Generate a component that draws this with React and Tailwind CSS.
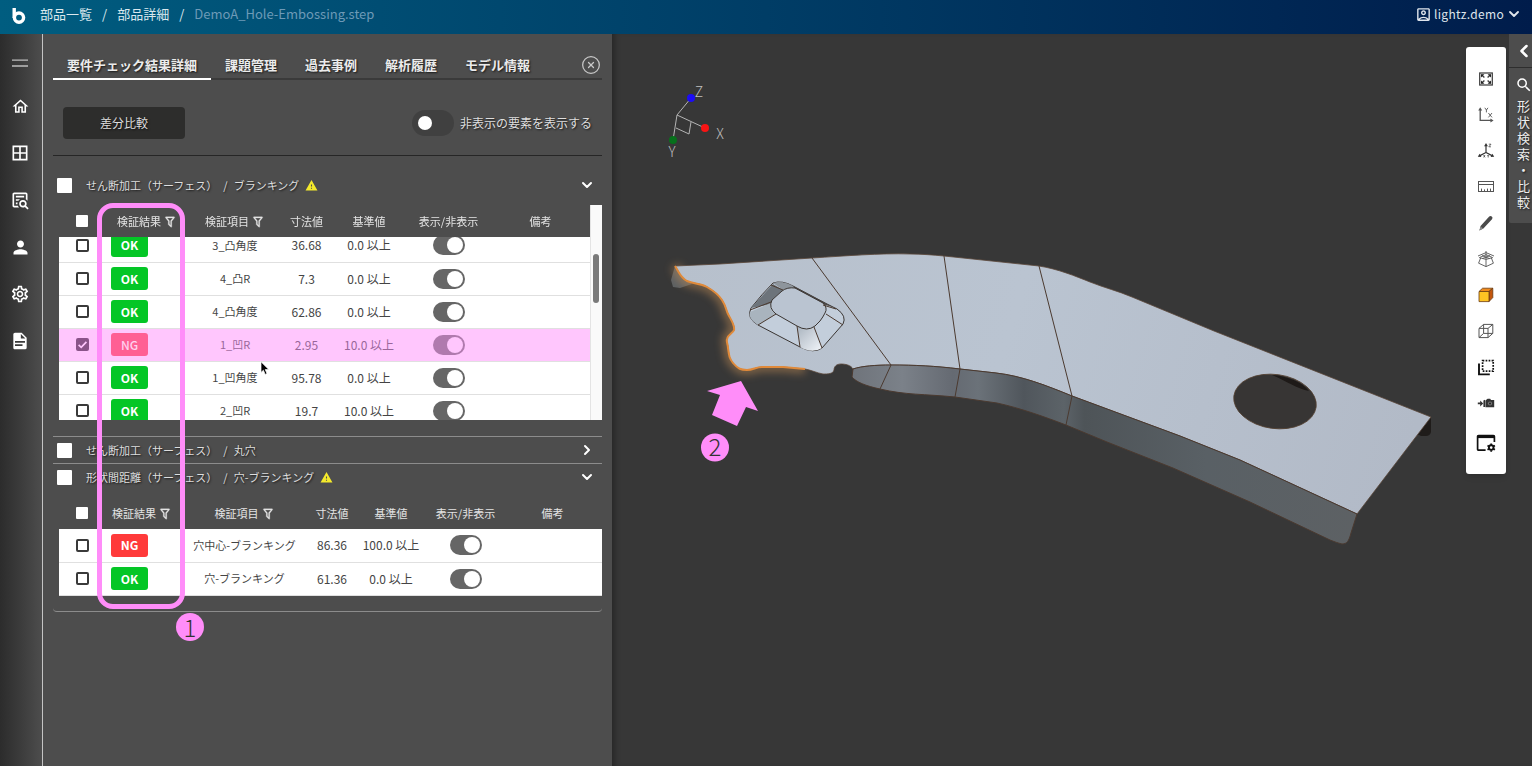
import { useLayoutEffect, useRef } from "react";
import {
  MdBorderAll,
  MdOutlineAccountBox,
  MdOutlineHome,
  MdOutlineSettings,
  MdPerson,
  MdSearch,
  MdWarning,
} from "react-icons/md";
import { ChevronDown, ChevronLeft, ChevronRight, CircleX } from "lucide-react";

const TABS = ["要件チェック結果詳細", "課題管理", "過去事例", "解析履歴", "モデル情報"];

const BLANKING_ROWS = [
  { result: "OK", item: "3_凸角度", size: "36.68", base: "0.0 以上" },
  { result: "OK", item: "4_凸R", size: "7.3", base: "0.0 以上" },
  { result: "OK", item: "4_凸角度", size: "62.86", base: "0.0 以上" },
  { result: "NG", item: "1_凹R", size: "2.95", base: "10.0 以上", selected: true },
  { result: "OK", item: "1_凹角度", size: "95.78", base: "0.0 以上" },
  { result: "OK", item: "2_凹R", size: "19.7", base: "10.0 以上" },
];

const DISTANCE_ROWS = [
  { result: "NG", item: "穴中心-ブランキング", size: "86.36", base: "100.0 以上" },
  { result: "OK", item: "穴-ブランキング", size: "61.36", base: "0.0 以上" },
];

const BLANKING_COLS = ["w-[46px]", "w-[84px]", "w-[92px]", "w-[51px]", "w-[74px]", "w-[85px]", ""];
const DISTANCE_COLS = ["w-[46px]", "w-[74px]", "w-[131px]", "w-[44px]", "w-[74px]", "w-[75px]", ""];

const SHADOW = "[text-shadow:1px_1px_2px_rgba(0,0,0,0.7)]";

/* ── Icons ── */
const FilterIcon = () => (
  <svg viewBox="0 0 24 24" className="mt-0.5 size-3.5 shrink-0" fill="currentColor" stroke="currentColor" strokeWidth=".5">
    <path d="M15,19.88C15.04,20.18 14.94,20.5 14.71,20.71C14.32,21.1 13.69,21.1 13.3,20.71L9.29,16.7C9.06,16.47 8.96,16.16 9,15.87V10.75L4.21,4.62C3.87,4.19 3.95,3.56 4.38,3.22C4.57,3.08 4.78,3 5,3H19C19.22,3 19.43,3.08 19.62,3.22C20.05,3.56 20.13,4.19 19.79,4.62L15,10.75V19.88M7.04,5L11,10.06V15.58L13,17.58V10.05L16.96,5H7.04Z" />
  </svg>
);

const DocSearchIcon = () => (
  <svg viewBox="0 0 24 24" className="size-5" fill="currentColor">
    <path d="M15.5,12C18,12 20,14 20,16.5C20,17.38 19.75,18.21 19.31,18.9L22.39,22L21,23.39L17.88,20.32C17.19,20.75 16.37,21 15.5,21C13,21 11,19 11,16.5C11,14 13,12 15.5,12M15.5,14A2.5,2.5 0 0,0 13,16.5A2.5,2.5 0 0,0 15.5,19A2.5,2.5 0 0,0 18,16.5A2.5,2.5 0 0,0 15.5,14M5,3H19C20.11,3 21,3.89 21,5V13.03C20.5,12.23 19.81,11.54 19,11V5H5V19H9.5C9.81,19.75 10.26,20.42 10.81,21H5C3.89,21 3,20.11 3,19V5C3,3.89 3.89,3 5,3M7,7H17V9H7V7M7,11H12.03C11.23,11.5 10.54,12.19 10,13H7V11M7,15H9.17C9.06,15.5 9,16 9,16.5V17H7V15Z" />
  </svg>
);

const FileIcon = () => (
  <svg viewBox="0 0 24 24" className="size-5" fill="currentColor">
    <path d="M13,9H18.5L13,3.5V9M6,2H14L20,8V20A2,2 0 0,1 18,22H6C4.89,22 4,21.1 4,20V4C4,2.89 4.89,2 6,2M15,18V16H6V18H15M18,14V12H6V14H18Z" />
  </svg>
);

const MenuIcon = () => (
  <svg viewBox="0 0 16 8" className="h-2 w-4" stroke="#bdbdbd" strokeWidth="1.3">
    <path d="M0 1.2H16M0 7H16" />
  </svg>
);

const NAV = [
  { label: "ホーム", icon: <MdOutlineHome size={19} /> },
  { label: "一覧", icon: <MdBorderAll size={20} /> },
  { label: "検索", icon: <DocSearchIcon /> },
  { label: "ユーザー", icon: <MdPerson size={21} /> },
  { label: "設定", icon: <MdOutlineSettings size={20} /> },
  { label: "ドキュメント", icon: <FileIcon /> },
];

const TOOLS = [
  {
    label: "全体表示",
    icon: (
      <svg viewBox="0 0 16 16" className="size-4" fill="none" stroke="#444" strokeWidth="1.3">
        <rect x="1.7" y="2" width="12.6" height="12" />
        <path d="M3.5 3.8L6.4 6.6M12.5 3.8L9.6 6.6M3.5 12.2L6.4 9.4M12.5 12.2L9.6 9.4" strokeWidth="1.4" />
        <path d="M3 3.3h3.4L3 6.6zM13 3.3H9.6L13 6.6zM3 12.7h3.4L3 9.4zM13 12.7H9.6L13 9.4z" fill="#222" stroke="none" />
      </svg>
    ),
  },
  {
    label: "XY平面",
    icon: (
      <svg viewBox="0 0 16 16" className="size-4" fill="none" stroke="#555" strokeWidth="1.3">
        <path d="M2.2 2.6V13.4H13" />
        <path d="M.2 3.6L2.2 .2L4.2 3.6zM12.4 11.4L15.6 13.4L12.4 15.4z" fill="#555" stroke="none" />
        <path d="M6.8 .8L8.4 3L10 .8M8.4 3V5.4M10.4 6L14 10.4M14 6L10.4 10.4" strokeWidth=".9" />
      </svg>
    ),
  },
  {
    label: "三軸表示",
    icon: (
      <svg viewBox="0 0 18 18" className="size-[18px]" fill="none" stroke="#333" strokeWidth="1.2">
        <path d="M9 3V10.5L3 13.6M9 10.5L15 13.6" />
        <path d="M7.1 4.2L9 1L10.9 4.2zM.8 14.8L2.6 11.8L4.4 14.9zM17.2 14.8L15.4 11.8L13.6 14.9z" fill="#333" stroke="none" />
        <path d="M11.8 2.2H14L11.8 4.8H14M6.6 13L8 15.4M8 13L6.6 15.4M10.3 13L11.2 14.2L12 13M11.2 14.2V15.5" strokeWidth=".7" />
      </svg>
    ),
  },
  {
    label: "計測",
    icon: (
      <svg viewBox="0 0 18 18" className="size-[18px]" fill="none" stroke="#555" strokeWidth="1">
        <rect x="1.5" y="3.5" width="15" height="10" />
        <path d="M1.5 6.5H16.5M4.5 13V10.6M7.5 13V11.4M10.5 13V10.6M13.5 13V10.6" />
      </svg>
    ),
  },
  {
    label: "メモ",
    icon: (
      <svg viewBox="0 0 18 18" className="size-[18px]" fill="#4a4a4a">
        <path d="M3.6 12L12.2 2.6Q13.4 1.4 14.8 2.6Q16.2 3.8 15 5.2L6.4 14.4L2.4 16.4z" />
        <path d="M2.4 16.4L3.6 12.6L6 14.6z" fill="#8a8a8a" />
      </svg>
    ),
  },
  {
    label: "断面",
    icon: (
      <svg viewBox="0 0 18 18" className="size-[18px]" fill="none" stroke="#555" strokeWidth=".9">
        <path d="M1 6L9 2.6L17 6M9 1V9.4M2.4 7.6L9 4.6L15.6 7.6L9 9.4zM5 5.6L12.6 8.6M13 5.6L5.4 8.6" />
        <path d="M3.6 8L1.6 13.2L9 16.6L16.4 13.2L14.4 8M9 9.4V16.6" />
      </svg>
    ),
  },
  {
    label: "シェーディング",
    icon: (
      <svg viewBox="0 0 18 18" className="size-[18px]" stroke="#6b3b12" strokeWidth=".8" strokeLinejoin="round">
        <path d="M2 5.5L5.6 2.2H15.8L12 5.5z" fill="#f08a1c" />
        <path d="M12 5.5L15.8 2.2V11.6L12 15.6z" fill="#c4560d" />
        <rect x="2" y="5.5" width="10" height="10.1" fill="#ffc423" />
      </svg>
    ),
  },
  {
    label: "ワイヤーフレーム",
    icon: (
      <svg viewBox="0 0 18 18" className="size-[18px]" fill="none" stroke="#555" strokeWidth="1" strokeLinejoin="round">
        <path d="M2 6.4H11V15.6H2zM2 6.4L6.6 2.4H15.8L11 6.4M15.8 2.4V11.4L11 15.6M6.6 2.4V11.4H15.8M6.6 11.4L2 15.6" />
      </svg>
    ),
  },
  {
    label: "範囲選択",
    icon: (
      <svg viewBox="0 0 18 18" className="size-[18px]" fill="none" stroke="#111" strokeWidth="1.7">
        <path d="M5.6 2.6H16.2V13.2H5.6z" strokeDasharray="1.7 1.3" />
        <path d="M2 5.4V16.4H12.8" strokeWidth="1.9" />
      </svg>
    ),
  },
  {
    label: "カメラ",
    icon: (
      <svg viewBox="0 0 18 18" className="size-[18px]" fill="#333">
        <path d="M.8 8.6H3.2V6.4L6.2 9.4L3.2 12.4V10.2H.8zM6.4 6.6L8 5.8V13H6.4zM8.4 6.4L10.6 4.8H13.2L14 6H17.2V13.2H8.4z" />
        <circle cx="13" cy="9.5" r="2.1" fill="#777" />
        <circle cx="13" cy="9.5" r="1" fill="#222" />
      </svg>
    ),
  },
  {
    label: "表示設定",
    icon: (
      <svg viewBox="0 0 20 20" className="size-5" fill="none" stroke="#111" strokeWidth="1.7">
        <path d="M9.6 17.2H2.6a1 1 0 0 1-1-1V3.6a1 1 0 0 1 1-1H17.4a1 1 0 0 1 1 1V9" />
        <path d="M1.6 3.6H18.4" strokeWidth="3" />
        <circle cx="15.2" cy="14.6" r="2.3" strokeWidth="1.9" />
        <path d="M15.2 10.4V12M15.2 17.2V18.8M11.5 12.5L13 13.4M17.4 15.8L18.9 16.7M18.9 12.5L17.4 13.4M13 15.8L11.5 16.7" strokeWidth="1.8" />
      </svg>
    ),
  },
];

/* ── Header ── */
function Header() {
  return (
    <header className="flex h-[34px] shrink-0 items-center justify-between bg-linear-to-r from-[#005d80] via-[#003d66] to-[#001c4b] pr-2.5 pb-1.5 pl-3 text-[13px] text-white">
      <div className="flex items-center">
        <a href="#top" aria-label="ホーム" className="mt-1">
          <svg viewBox="0 0 14 18" className="h-[18px] w-3.5" fill="none" stroke="#fff" strokeWidth="3.4">
            <path d="M2.2 1V11" />
            <circle cx="7" cy="10.6" r="4.6" />
          </svg>
        </a>
        <nav className="ml-3.5 flex items-center gap-2.5 text-[#dbe8ee]">
          <a href="#parts">部品一覧</a>
          <span>/</span>
          <a href="#detail">部品詳細</a>
          <span>/</span>
          <span className="text-[#6d9ab7]">DemoA_Hole-Embossing.step</span>
        </nav>
      </div>
      <button className="flex items-center gap-0.5 text-xs text-[#dfe5ec]">
        <MdOutlineAccountBox size={17} />
        <span className="tracking-wide">lightz.demo</span>
        <ChevronDown size={16} strokeWidth={2.8} />
      </button>
    </header>
  );
}

function Sidebar() {
  return (
    <nav className="flex w-[43px] shrink-0 flex-col items-center gap-[27px] border-r border-[#c4c4c4] bg-linear-to-r from-[#2c2c2c] to-[#4d4d4d] pt-[19px] pr-0.5 text-white">
      <button aria-label="メニュー" className="-mb-1 flex h-5 items-center">
        <MenuIcon />
      </button>
      {NAV.map((n) => (
        <button key={n.label} aria-label={n.label} className="flex h-5 items-center">
          {n.icon}
        </button>
      ))}
    </nav>
  );
}

/* ── Result tables ── */
function Toggle({ selected, label }) {
  return (
    <input
      type="checkbox"
      role="switch"
      aria-label={label}
      defaultChecked
      className={`block h-5 w-8 appearance-none rounded-full pt-0.5 pl-0.5 before:block before:size-4 before:rounded-full checked:before:translate-x-3 ${
        selected ? "bg-[#b07aae] before:bg-[#ffc6fd]" : "bg-[#666] before:bg-white"
      }`}
    />
  );
}

function RowCheck({ selected, label }) {
  return (
    <span className="relative block size-[13px]">
      <input
        type="checkbox"
        aria-label={label}
        defaultChecked={selected}
        className="block size-[13px] appearance-none rounded-xs border-2 border-[#3a3a3a] checked:border-[#8a5389] checked:bg-[#8a5389]"
      />
      {selected && (
        <svg viewBox="0 0 13 13" className="pointer-events-none absolute inset-0" fill="none" stroke="#ffc6fd" strokeWidth="1.7">
          <path d="M2.6 6.8L5.2 9.3L10.4 3.8" />
        </svg>
      )}
    </span>
  );
}

function Th({ children, filter }) {
  return (
    <th className="p-0 font-normal whitespace-nowrap">
      <span className="flex items-center justify-center gap-0.5">
        {children}
        {filter && <FilterIcon />}
      </span>
    </th>
  );
}

function ResultTable({ name, cols, rows }) {
  return (
    <table className="w-full table-fixed border-collapse bg-white">
      <colgroup>
        {cols.map((c, i) => (
          <col key={i} className={c} />
        ))}
      </colgroup>
      <thead className="sticky top-0 z-10 bg-[#4d4d4d] text-[11px] text-[#e4e4e4]">
        <tr className="h-8">
          <th className="p-0">
            <input
              type="checkbox"
              aria-label={`${name} すべて選択`}
              className="mx-auto block size-3 appearance-none rounded-[1px] bg-white"
            />
          </th>
          <Th filter>検証結果</Th>
          <Th filter>検証項目</Th>
          <Th>寸法値</Th>
          <Th>基準値</Th>
          <Th>表示/非表示</Th>
          <Th>備考</Th>
        </tr>
      </thead>
      <tbody className="text-center text-xs">
        {rows.map((r) => (
          <tr
            key={r.item}
            className={`h-[33px] ${r.selected ? "bg-[#ffc6fd] text-[#9a669a]" : "bg-white text-[#444]"}`}
          >
            <td className="border-b border-[#e0e0e0] p-0">
              <span className="flex justify-center">
                <RowCheck selected={r.selected} label={`${r.item} を選択`} />
              </span>
            </td>
            <td className="border-b border-[#e0e0e0] p-0 pl-1.5">
              <span
                className={`flex h-[23px] w-[37px] items-center justify-center rounded-[3px] ${
                  r.selected
                    ? "bg-[#ff5f94] font-medium text-[#ffd0ef]"
                    : r.result === "OK"
                      ? "bg-[#04c626] font-bold text-white"
                      : "bg-[#ff3a3a] font-bold text-white"
                }`}
              >
                {r.result}
              </span>
            </td>
            <td className="border-b border-[#e0e0e0] p-0 text-[11px] whitespace-nowrap">{r.item}</td>
            <td className="border-b border-[#e0e0e0] p-0">{r.size}</td>
            <td className="border-b border-[#e0e0e0] p-0 whitespace-nowrap">{r.base}</td>
            <td className="border-b border-[#e0e0e0] p-0">
              <span className="flex justify-center">
                <Toggle selected={r.selected} label={`${r.item} 表示/非表示`} />
              </span>
            </td>
            <td className="border-b border-[#e0e0e0] p-0" />
          </tr>
        ))}
      </tbody>
    </table>
  );
}

function SectionTitle({ id, process, feature, warn, open }) {
  return (
    <div className="flex h-[26px] items-center pr-[7px] pl-1">
      <input id={id} type="checkbox" className="size-[15px] appearance-none rounded-[1px] bg-white" />
      <label htmlFor={id} className={`ml-3.5 flex gap-1.5 text-[11px] text-[#dedede] ${SHADOW}`}>
        <span>{process}</span>
        <span>/</span>
        <span>{feature}</span>
      </label>
      {warn && <MdWarning size={13} className="ml-1.5 text-[#f4e92c]" />}
      <button aria-label={`${feature} 開閉`} className="ml-auto text-white">
        {open ? <ChevronDown size={16} strokeWidth={3} /> : <ChevronRight size={16} strokeWidth={3} />}
      </button>
    </div>
  );
}

function CheckPanel() {
  const scrollRef = useRef(null);
  useLayoutEffect(() => {
    if (scrollRef.current) scrollRef.current.scrollTop = 8;
  }, []);

  return (
    <section className="relative min-w-0 flex-1 bg-[#4d4d4d] px-2.5 pt-[17px]">
      {/* Tabs */}
      <div className="flex items-center border-b-2 border-[#3a3a3a]">
        <div role="tablist" className="flex">
          {TABS.map((t, i) => (
            <button
              key={t}
              role="tab"
              aria-selected={i === 0}
              className={`-mb-0.5 h-[29px] border-b-2 px-3.5 text-[13px] font-bold whitespace-nowrap text-[#ebebeb] ${SHADOW} ${
                i === 0 ? "border-white" : "border-transparent"
              }`}
            >
              {t}
            </button>
          ))}
        </div>
        <button aria-label="閉じる" className="mr-px ml-auto text-[#c8c8c8]">
          <CircleX size={20} strokeWidth={1.5} />
        </button>
      </div>

      {/* Actions */}
      <div className="flex items-center justify-between border-b border-[#262626] px-2.5 pt-[27px] pb-4 text-xs text-[#dedede]">
        <button className={`h-8 w-[122px] rounded-sm bg-[#2d2d2c] ${SHADOW}`}>差分比較</button>
        <label className={`flex items-center gap-1.5 ${SHADOW}`}>
          <input
            type="checkbox"
            role="switch"
            className="h-[26px] w-[42px] appearance-none rounded-full bg-[#404040] p-1.5 before:block before:size-3.5 before:rounded-full before:bg-white"
          />
          非表示の要素を表示する
        </label>
      </div>

      {/* Sections */}
      <div className="border-b border-[#8c8c8c] pt-4 pb-4">
        <SectionTitle id="sec-blanking" process="せん断加工（サーフェス）" feature="ブランキング" warn open />
        <div className="mt-[7px] ml-1.5 flex h-[215px]">
          <div ref={scrollRef} className="min-w-0 flex-1 overflow-hidden">
            <ResultTable name="ブランキング" cols={BLANKING_COLS} rows={BLANKING_ROWS} />
          </div>
          <div className="w-3 border-l border-[#e4e4e4] bg-[#fafafa] pt-[49px] pl-0.5">
            <div className="h-[49px] w-1.5 rounded-full bg-[#7a7a7a]" />
          </div>
        </div>
      </div>
      <div className="border-b border-[#8c8c8c]">
        <SectionTitle id="sec-hole" process="せん断加工（サーフェス）" feature="丸穴" />
      </div>
      <div className="rounded-b-sm border-b border-[#8c8c8c] pb-[15px]">
        <SectionTitle id="sec-distance" process="形状間距離（サーフェス）" feature="穴-ブランキング" warn open />
        <div className="mt-[7px] ml-1.5">
          <ResultTable name="形状間距離" cols={DISTANCE_COLS} rows={DISTANCE_ROWS} />
        </div>
      </div>

      {/* Callout over the result columns */}
      <div className="pointer-events-none absolute top-[169px] left-[54px] z-20 h-[406px] w-[88px] rounded-2xl border-[5px] border-[#ff8df9]" />
      <div className="absolute top-[579px] left-[133px] z-20 flex size-7 items-center justify-center rounded-full bg-[#ff8df9] text-2xl leading-none font-light text-[#333]">
        1
      </div>
      <svg viewBox="0 0 10 15" className="pointer-events-none absolute top-[327px] left-[217px] z-20 h-[15px] w-2.5">
        <path d="M1 .8V11.4L3.4 9.2L5.2 13.4L7 12.6L5.2 8.6H8.8z" fill="#000" stroke="#fff" strokeWidth=".7" />
      </svg>
    </section>
  );
}

/* ── 3D model ── */
const EDGE = { stroke: "#4b3a30", strokeWidth: 1, fill: "none" };
const TRIM =
  "M675 266C679 272 680 277 687 281C694 284 700 283 707 287C714 291 718 294 722 300C726 306 726 310 728 314C731 320 735 325 734 330C733 333 728 334 727 339C726 342 728 344 728 348C729 355 729 358 733 363C738 369 741 370 747 370C753 370 756 367 762 367L783 367L805 369";

function Model() {
  return (
    <svg
      viewBox="612 34 920 732"
      className="absolute inset-0 size-full"
      fontFamily="'Noto Sans CJK JP', sans-serif"
      role="img"
      aria-label="3Dモデル"
    >
      <defs>
        <linearGradient id="plate" x1="675" y1="260" x2="1400" y2="480" gradientUnits="userSpaceOnUse">
          <stop offset="0" stopColor="#b7c0cc" />
          <stop offset=".45" stopColor="#bac4d1" />
          <stop offset="1" stopColor="#b2bac7" />
        </linearGradient>
        <linearGradient id="flange" x1="852" y1="0" x2="1357" y2="0" gradientUnits="userSpaceOnUse">
          <stop offset="0" stopColor="#6f747b" />
          <stop offset=".1" stopColor="#7b8189" />
          <stop offset=".2" stopColor="#656a72" />
          <stop offset=".25" stopColor="#6b7279" />
          <stop offset=".34" stopColor="#50565c" />
          <stop offset=".42" stopColor="#5c6368" />
          <stop offset=".46" stopColor="#4e5458" />
          <stop offset=".7" stopColor="#596065" />
          <stop offset="1" stopColor="#5d6164" />
        </linearGradient>
        <linearGradient id="boss" x1="0" y1="0" x2="1" y2="1">
          <stop offset="0" stopColor="#a9b3be" />
          <stop offset="1" stopColor="#f1f5fa" />
        </linearGradient>
        <filter id="glow" x="-20%" y="-20%" width="140%" height="140%">
          <feGaussianBlur stdDeviation="4" />
        </filter>
      </defs>

      {/* Axes */}
      <g stroke="#b4b4b4" strokeWidth="1" fill="none">
        <path d="M677 115L691 98M677 115L705 128M677 115L673 140M676 128L689 134L691 122" />
      </g>
      <circle cx="691" cy="98" r="4" fill="#1c0cf5" />
      <circle cx="705" cy="128" r="4" fill="#f81414" />
      <circle cx="673" cy="140" r="4" fill="#07701b" />
      <g fill="#c0c0c0" fontSize="14" fontWeight="300" textAnchor="middle">
        <text x="699" y="97">Z</text>
        <text x="720" y="139">X</text>
        <text x="672" y="157">Y</text>
      </g>

      {/* Back faces */}
      <path d="M675 266L671 280L673 287L680 288L692 284L687 281z" fill="#5d6062" />
      <path d="M1431 417L1431 432Q1430 436 1426 436H1421L1417 434z" fill="#1f1c1a" />
      <path d={TRIM} fill="none" stroke="#c48f57" strokeWidth="9" opacity=".55" filter="url(#glow)" />

      {/* Plate with the round hole */}
      <path
        d="M675 266L720 264L812 258C845 256 880 253 910 254C922 254 933 255 944 256L1039 266C1058 269 1075 276 1090 282C1105 288 1118 291 1132 297L1214 331L1431 417L1357 514L1240 460L1180 436L1072 396C1045 385 1022 376 996 373L960 369C935 366 915 365 891 365C876 365 862 366 853 369C851 365 845 364 841 364C836 364 834 367 834 370C833 374 828 374 823 374C817 373 811 370 805 369L783 367L762 367C756 367 753 370 747 370C741 370 738 369 733 363C729 358 729 355 728 348C728 344 726 342 727 339C728 334 733 333 734 330C735 325 731 320 728 314C726 310 726 306 722 300C718 294 714 291 707 287C700 283 694 284 687 281C680 277 679 272 675 266z"
        fill="url(#plate)"
        stroke="#5a4638"
        strokeWidth=".8"
      />
      <ellipse cx="1275" cy="401.5" rx="41.5" ry="27" transform="rotate(8 1275 401.5)" fill="#373534" stroke="#54402f" strokeWidth=".8" />
      <path d="M1272 375C1288 376 1302 382 1309 391C1298 389 1286 381 1272 375z" fill="#1e1a18" />

      {/* Flange */}
      <path
        d="M853 369C862 366 876 365 891 365C915 365 935 366 960 369L996 373C1022 376 1045 385 1072 396L1180 436L1240 460L1357 514L1351 533C1349 541 1347 544 1342 544C1338 543 1335 542 1330 540L1290 521L1250 502L1173 468L1107 442L1066 425C1045 417 1020 408 997 403L955 397C925 394 905 395 880 389C866 386 856 382 852 377z"
        fill="url(#flange)"
        stroke="#4b3a30"
        strokeWidth="1"
      />
      <g {...EDGE}>
        <path d="M812 258L891 365L880 389M944 256L960 369L955 397M1039 266L1072 396L1066 425" />
      </g>

      {/* Embossing */}
      <path
        d="M773 283Q782 280 793 286L827 304L837 309Q847 316 843 324L822 348Q814 354 800 347L758 325Q746 318 751 308Q762 294 773 283z"
        fill="#c3cedb"
        stroke="#3a3532"
      />
      <path d="M751 308L773 284L783 290L772 300V304z" fill="#6d747b" />
      <path d="M773 283Q782 280 793 286L795 289L783 290z" fill="#8e959c" />
      <path d="M750 312L771 303Q769 311 776 314L758 325Q748 319 750 312z" fill="#a9b4be" />
      <path d="M797 326Q807 331 814 327L822 348Q812 354 800 347z" fill="url(#boss)" />
      <path d="M793 286L833 307L822 304L795 289z" fill="#4a4645" />
      <path
        d="M782 291Q787 287 795 288L823 303Q828 308 825 313Q823 317 820 321L815 326Q807 332 797 326L776 314Q768 308 772 300z"
        fill="#bac4d1"
        stroke="#3a3532"
      />
      <path d="M750 310L771 302M758 325L776 314M800 347L797 326M822 348L814 327M843 325L826 314M771 285L783 290M836 309L823 305" {...EDGE} />

      {/* Highlighted trim line */}
      <path d={TRIM} fill="none" stroke="#e08a3a" strokeWidth="2" />

      {/* Callout */}
      <path d="M741 381L758 411L746 407L737 426L712 415L720 395L707 391z" fill="#ff8df9" />
      <circle cx="715" cy="447.5" r="14" fill="#ff8df9" />
      <text x="715" y="456" fontSize="24" fontWeight="300" textAnchor="middle" fill="#333">
        2
      </text>
    </svg>
  );
}

function Viewer() {
  return (
    <main className="relative flex min-w-0 flex-1 items-start justify-end bg-[#373737] shadow-[inset_6px_0_6px_-4px_rgba(0,0,0,0.35)]">
      <Model />
      <div className="relative mt-[13px] mr-[3px] flex w-10 flex-col rounded-[3px] bg-white pt-3.5 pb-[9px] shadow-md">
        {TOOLS.map((t) => (
          <button key={t.label} aria-label={t.label} className="flex h-9 items-center justify-center last:h-11">
            {t.icon}
          </button>
        ))}
      </div>
      <aside className="relative w-[23px] overflow-hidden rounded-bl-xs bg-[#4d4d4d] text-white">
        <button aria-label="開く" className="flex h-[34px] w-full items-center justify-center border-b border-[#2e2e2e] pl-1.5">
          <ChevronLeft size={20} strokeWidth={3} className="shrink-0" />
        </button>
        <button className="flex h-[155px] w-full flex-col items-center pt-2 pl-1.5">
          <MdSearch size={18} className="shrink-0" />
          <span className={`mt-1 w-[13px] text-[13px] leading-4 text-[#ececec] [line-break:anywhere] ${SHADOW}`}>
            形状検索・比較
          </span>
        </button>
      </aside>
    </main>
  );
}

export default function App() {
  return (
    <div className="flex min-h-screen flex-col overflow-hidden bg-[#373737] font-['Noto_Sans_CJK_JP','Noto_Sans',sans-serif]">
      <Header />
      <div className="grid flex-1 grid-cols-[153fr_230fr]">
        <div className="flex min-w-0">
          <Sidebar />
          <CheckPanel />
        </div>
        <Viewer />
      </div>
    </div>
  );
}
